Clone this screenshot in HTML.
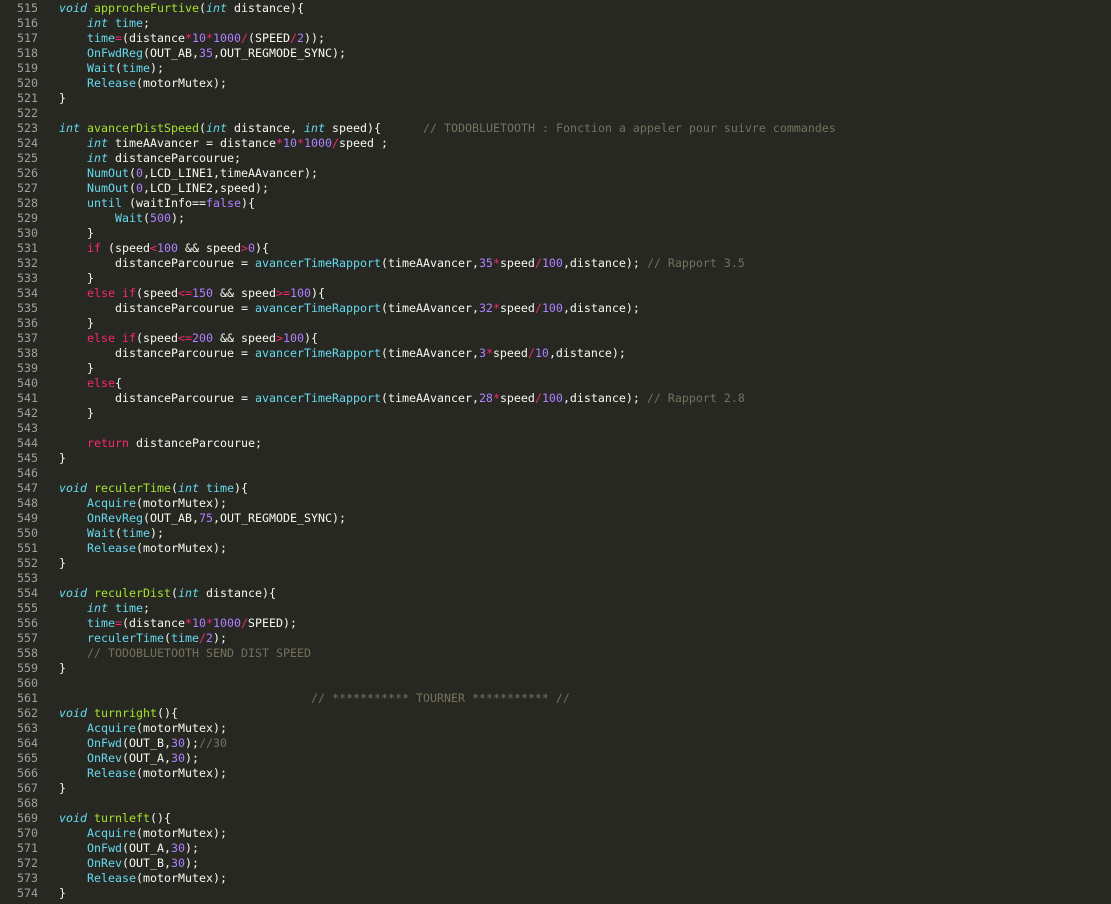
<!DOCTYPE html>
<html><head><meta charset="utf-8"><style>
html,body{margin:0;padding:0;background:#272822;width:1111px;height:904px;overflow:hidden}
.w{position:relative;font-family:"DejaVu Sans Mono","Liberation Mono",monospace;font-size:11.63px;line-height:15px;color:#f8f8f2;padding-top:1px}
.l{height:15px;white-space:pre;position:relative}
.ln{position:absolute;left:0;width:38px;text-align:right;color:#a0a19b}
.c0{position:absolute;left:59px}
.k{color:#66d9ef;font-style:italic}
.f{color:#a6e22e}
.s{color:#66d9ef}
.n{color:#ae81ff}
.o{color:#f92672}
.c{color:#75715e}
</style></head><body><div class="w">
<div class="l"><span class="ln">515</span><span class="c0"><span class="k">void</span> <span class="f">approcheFurtive</span>(<span class="k">int</span> distance){</span></div>
<div class="l"><span class="ln">516</span><span class="c0">    <span class="k">int</span> <span class="s">time</span>;</span></div>
<div class="l"><span class="ln">517</span><span class="c0">    <span class="s">time</span><span class="o">=</span>(distance<span class="o">*</span><span class="n">10</span><span class="o">*</span><span class="n">1000</span><span class="o">/</span>(SPEED<span class="o">/</span><span class="n">2</span>));</span></div>
<div class="l"><span class="ln">518</span><span class="c0">    <span class="s">OnFwdReg</span>(OUT_AB,<span class="n">35</span>,OUT_REGMODE_SYNC);</span></div>
<div class="l"><span class="ln">519</span><span class="c0">    <span class="s">Wait</span>(<span class="s">time</span>);</span></div>
<div class="l"><span class="ln">520</span><span class="c0">    <span class="s">Release</span>(motorMutex);</span></div>
<div class="l"><span class="ln">521</span><span class="c0">}</span></div>
<div class="l"><span class="ln">522</span></div>
<div class="l"><span class="ln">523</span><span class="c0"><span class="k">int</span> <span class="f">avancerDistSpeed</span>(<span class="k">int</span> distance, <span class="k">int</span> speed){      <span class="c">// TODOBLUETOOTH : Fonction a appeler pour suivre commandes</span></span></div>
<div class="l"><span class="ln">524</span><span class="c0">    <span class="k">int</span> timeAAvancer = distance<span class="o">*</span><span class="n">10</span><span class="o">*</span><span class="n">1000</span><span class="o">/</span>speed ;</span></div>
<div class="l"><span class="ln">525</span><span class="c0">    <span class="k">int</span> distanceParcourue;</span></div>
<div class="l"><span class="ln">526</span><span class="c0">    <span class="s">NumOut</span>(<span class="n">0</span>,LCD_LINE1,timeAAvancer);</span></div>
<div class="l"><span class="ln">527</span><span class="c0">    <span class="s">NumOut</span>(<span class="n">0</span>,LCD_LINE2,speed);</span></div>
<div class="l"><span class="ln">528</span><span class="c0">    <span class="s">until</span> (waitInfo==<span class="n">false</span>){</span></div>
<div class="l"><span class="ln">529</span><span class="c0">        <span class="s">Wait</span>(<span class="n">500</span>);</span></div>
<div class="l"><span class="ln">530</span><span class="c0">    }</span></div>
<div class="l"><span class="ln">531</span><span class="c0">    <span class="o">if</span> (speed<span class="o">&lt;</span><span class="n">100</span> &amp;&amp; speed<span class="o">&gt;</span><span class="n">0</span>){</span></div>
<div class="l"><span class="ln">532</span><span class="c0">        distanceParcourue = <span class="s">avancerTimeRapport</span>(timeAAvancer,<span class="n">35</span><span class="o">*</span>speed<span class="o">/</span><span class="n">100</span>,distance); <span class="c">// Rapport 3.5</span></span></div>
<div class="l"><span class="ln">533</span><span class="c0">    }</span></div>
<div class="l"><span class="ln">534</span><span class="c0">    <span class="o">else if</span>(speed<span class="o">&lt;=</span><span class="n">150</span> &amp;&amp; speed<span class="o">&gt;=</span><span class="n">100</span>){</span></div>
<div class="l"><span class="ln">535</span><span class="c0">        distanceParcourue = <span class="s">avancerTimeRapport</span>(timeAAvancer,<span class="n">32</span><span class="o">*</span>speed<span class="o">/</span><span class="n">100</span>,distance);</span></div>
<div class="l"><span class="ln">536</span><span class="c0">    }</span></div>
<div class="l"><span class="ln">537</span><span class="c0">    <span class="o">else if</span>(speed<span class="o">&lt;=</span><span class="n">200</span> &amp;&amp; speed<span class="o">&gt;</span><span class="n">100</span>){</span></div>
<div class="l"><span class="ln">538</span><span class="c0">        distanceParcourue = <span class="s">avancerTimeRapport</span>(timeAAvancer,<span class="n">3</span><span class="o">*</span>speed<span class="o">/</span><span class="n">10</span>,distance);</span></div>
<div class="l"><span class="ln">539</span><span class="c0">    }</span></div>
<div class="l"><span class="ln">540</span><span class="c0">    <span class="o">else</span>{</span></div>
<div class="l"><span class="ln">541</span><span class="c0">        distanceParcourue = <span class="s">avancerTimeRapport</span>(timeAAvancer,<span class="n">28</span><span class="o">*</span>speed<span class="o">/</span><span class="n">100</span>,distance); <span class="c">// Rapport 2.8</span></span></div>
<div class="l"><span class="ln">542</span><span class="c0">    }</span></div>
<div class="l"><span class="ln">543</span></div>
<div class="l"><span class="ln">544</span><span class="c0">    <span class="o">return</span> distanceParcourue;</span></div>
<div class="l"><span class="ln">545</span><span class="c0">}</span></div>
<div class="l"><span class="ln">546</span></div>
<div class="l"><span class="ln">547</span><span class="c0"><span class="k">void</span> <span class="f">reculerTime</span>(<span class="k">int</span> <span class="s">time</span>){</span></div>
<div class="l"><span class="ln">548</span><span class="c0">    <span class="s">Acquire</span>(motorMutex);</span></div>
<div class="l"><span class="ln">549</span><span class="c0">    <span class="s">OnRevReg</span>(OUT_AB,<span class="n">75</span>,OUT_REGMODE_SYNC);</span></div>
<div class="l"><span class="ln">550</span><span class="c0">    <span class="s">Wait</span>(<span class="s">time</span>);</span></div>
<div class="l"><span class="ln">551</span><span class="c0">    <span class="s">Release</span>(motorMutex);</span></div>
<div class="l"><span class="ln">552</span><span class="c0">}</span></div>
<div class="l"><span class="ln">553</span></div>
<div class="l"><span class="ln">554</span><span class="c0"><span class="k">void</span> <span class="f">reculerDist</span>(<span class="k">int</span> distance){</span></div>
<div class="l"><span class="ln">555</span><span class="c0">    <span class="k">int</span> <span class="s">time</span>;</span></div>
<div class="l"><span class="ln">556</span><span class="c0">    <span class="s">time</span><span class="o">=</span>(distance<span class="o">*</span><span class="n">10</span><span class="o">*</span><span class="n">1000</span><span class="o">/</span>SPEED);</span></div>
<div class="l"><span class="ln">557</span><span class="c0">    <span class="s">reculerTime</span>(<span class="s">time</span><span class="o">/</span><span class="n">2</span>);</span></div>
<div class="l"><span class="ln">558</span><span class="c0">    <span class="c">// TODOBLUETOOTH SEND DIST SPEED</span></span></div>
<div class="l"><span class="ln">559</span><span class="c0">}</span></div>
<div class="l"><span class="ln">560</span></div>
<div class="l"><span class="ln">561</span><span class="c0">                                    <span class="c">// *********** TOURNER *********** //</span></span></div>
<div class="l"><span class="ln">562</span><span class="c0"><span class="k">void</span> <span class="f">turnright</span>(){</span></div>
<div class="l"><span class="ln">563</span><span class="c0">    <span class="s">Acquire</span>(motorMutex);</span></div>
<div class="l"><span class="ln">564</span><span class="c0">    <span class="s">OnFwd</span>(OUT_B,<span class="n">30</span>);<span class="c">//30</span></span></div>
<div class="l"><span class="ln">565</span><span class="c0">    <span class="s">OnRev</span>(OUT_A,<span class="n">30</span>);</span></div>
<div class="l"><span class="ln">566</span><span class="c0">    <span class="s">Release</span>(motorMutex);</span></div>
<div class="l"><span class="ln">567</span><span class="c0">}</span></div>
<div class="l"><span class="ln">568</span></div>
<div class="l"><span class="ln">569</span><span class="c0"><span class="k">void</span> <span class="f">turnleft</span>(){</span></div>
<div class="l"><span class="ln">570</span><span class="c0">    <span class="s">Acquire</span>(motorMutex);</span></div>
<div class="l"><span class="ln">571</span><span class="c0">    <span class="s">OnFwd</span>(OUT_A,<span class="n">30</span>);</span></div>
<div class="l"><span class="ln">572</span><span class="c0">    <span class="s">OnRev</span>(OUT_B,<span class="n">30</span>);</span></div>
<div class="l"><span class="ln">573</span><span class="c0">    <span class="s">Release</span>(motorMutex);</span></div>
<div class="l"><span class="ln">574</span><span class="c0">}</span></div>
</div></body></html>
